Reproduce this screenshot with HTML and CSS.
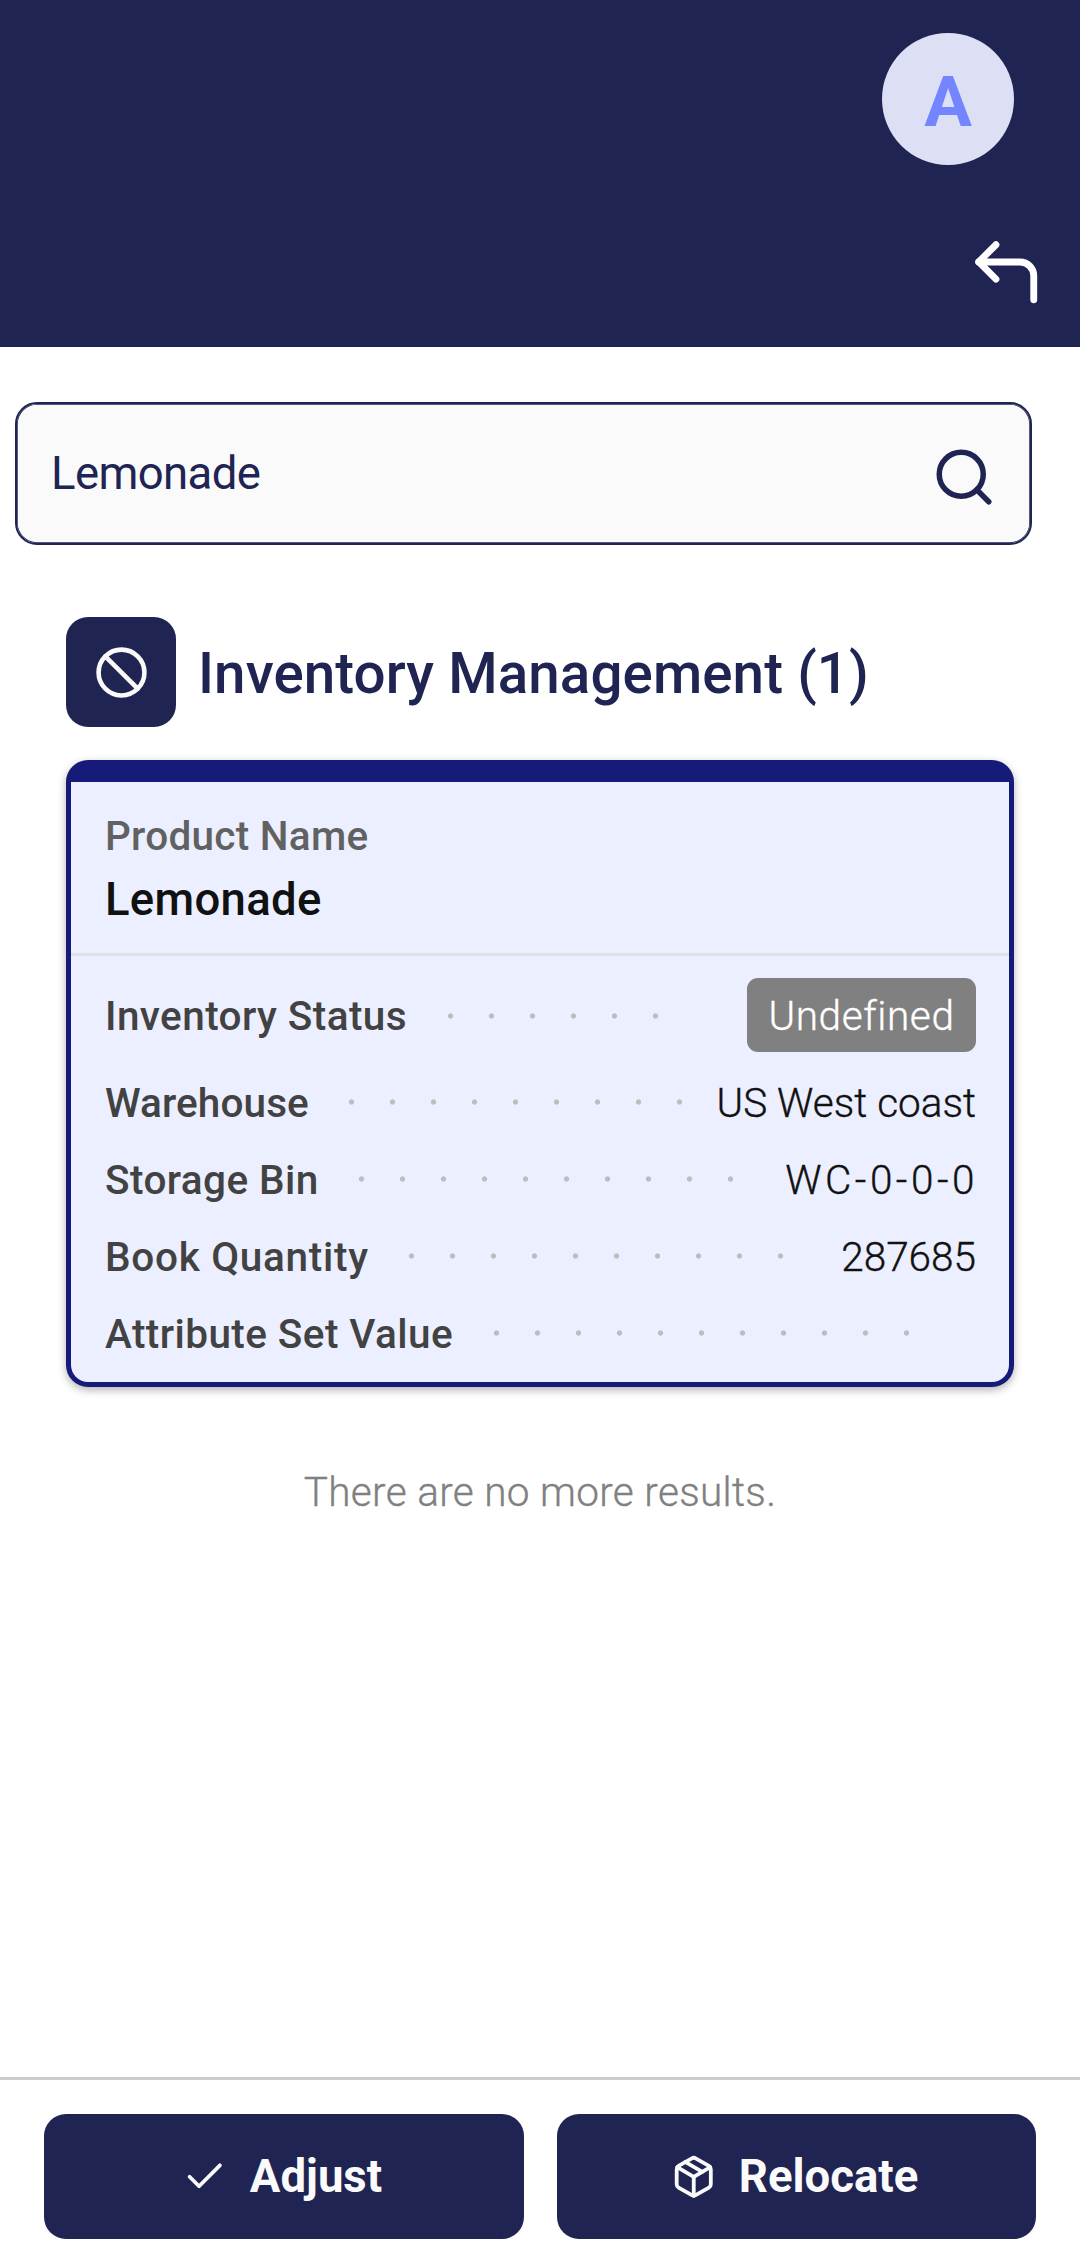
FILE: index.html
```html
<!DOCTYPE html>
<html lang="en">
<head>
<meta charset="utf-8">
<title>Inventory Management</title>
<link rel="stylesheet" href="styles.css">
</head>
<body>
<header class="header">
  <div class="avatar">A</div>
  <svg class="back" viewBox="0 0 24 24"><polyline points="9 14 4 9 9 4"/><path d="M20 20v-7a4 4 0 0 0-4-4H4"/></svg>
</header>
<main class="main">
  <div class="search">
    <span class="search-text">Lemonade</span>
    <svg class="search-icon" viewBox="0 0 24 24"><circle cx="11" cy="11" r="8"/><line x1="21" y1="21" x2="16.65" y2="16.65"/></svg>
  </div>
  <div class="section-head">
    <div class="section-icon"><svg viewBox="0 0 24 24"><circle cx="12" cy="12" r="10"/><line x1="4.93" y1="4.93" x2="19.07" y2="19.07"/></svg></div>
    <h1 class="title">Inventory Management (1)</h1>
  </div>
  <section class="card">
    <div class="product">
      <div class="product-label">Product Name</div>
      <div class="product-name">Lemonade</div>
    </div>
    <div class="rows">
      <div class="row row-status"><span class="label">Inventory Status</span><i class="dots dots-6"></i><span class="badge">Undefined</span></div>
      <div class="row"><span class="label label-warehouse">Warehouse</span><i class="dots dots-9"></i><span class="value">US West coast</span></div>
      <div class="row"><span class="label">Storage Bin</span><i class="dots dots-10"></i><span class="value value-bin">WC-0-0-0</span></div>
      <div class="row"><span class="label label-quantity">Book Quantity</span><i class="dots dots-10"></i><span class="value">287685</span></div>
      <div class="row"><span class="label">Attribute Set Value</span><i class="dots dots-11"></i></div>
    </div>
  </section>
  <p class="no-more">There are no more results.</p>
</main>
<footer class="actions">
  <button class="btn"><svg viewBox="0 0 24 24"><polyline points="20 6 9 17 4 12"/></svg><span>Adjust</span></button>
  <button class="btn"><svg viewBox="0 0 24 24"><line x1="16.5" y1="9.4" x2="7.5" y2="4.21"/><path d="M21 16V8a2 2 0 0 0-1-1.73l-7-4a2 2 0 0 0-2 0l-7 4A2 2 0 0 0 3 8v8a2 2 0 0 0 1 1.73l7 4a2 2 0 0 0 2 0l7-4A2 2 0 0 0 21 16z"/><polyline points="3.27 6.96 12 12.01 20.73 6.96"/><line x1="12" y1="22.08" x2="12" y2="12"/></svg><span>Relocate</span></button>
</footer>
</body>
</html>
```
FILE: styles.css
```css
* { box-sizing: border-box; }
body {
  margin: 0;
  height: 2255px;
  display: flex;
  flex-direction: column;
  background: #fff;
  color: #111;
  font-family: Roboto, "Noto Sans", sans-serif;
  font-size: 40.5px;
}
svg {
  display: block;
  fill: none;
  stroke: currentColor;
  stroke-width: 2;
  stroke-linecap: round;
  stroke-linejoin: round;
}
.header {
  height: 347px;
  padding: 33px 33px 0 0;
  display: flex;
  flex-direction: column;
  align-items: flex-end;
  gap: 66px;
  background: #202452;
  color: #fff;
}
.avatar {
  width: 132px;
  height: 132px;
  margin-right: 33px;
  border-radius: 50%;
  background: #dddff5;
  color: #7385ff;
  font-size: 71px;
  font-weight: 700;
  line-height: 137px;
  text-align: center;
}
.back { width: 82.5px; height: 82.5px; }
.main { flex: 1; display: flex; flex-direction: column; }
.search {
  height: 143px;
  margin: 55px 48px 0 15px;
  padding: 0 33px 0 34px;
  display: flex;
  align-items: center;
  justify-content: space-between;
  border: 2px solid #202452;
  border-radius: 22px;
  box-shadow: inset 0 0 0 0.75px #202452;
  background: #fafafa;
  color: #202452;
}
.search-text {
  font-size: 45.5px;
  letter-spacing: -0.6px;
  line-height: 60px;
}
.search-icon { width: 66px; height: 66px; margin-top: 6px; }
.section-head {
  margin: 72px 66px 0;
  height: 110px;
  display: flex;
  align-items: center;
  gap: 22px;
}
.section-icon {
  width: 110px;
  height: 110px;
  display: grid;
  place-items: center;
  border-radius: 22px;
  background: #202452;
  color: #fafafa;
}
.section-icon svg { width: 55px; height: 55px; }
.title {
  margin: 0;
  padding-top: 3px;
  color: #202452;
  font-size: 56.5px;
  font-weight: 500;
  letter-spacing: 0.1px;
  line-height: 70px;
  white-space: nowrap;
}
.card {
  height: 627px;
  margin: 33px 66px 0;
  border: 5.5px solid #161a78;
  border-top-width: 22px;
  border-radius: 22px;
  background: #ecefff;
  box-shadow: 0 3px 8px rgba(0, 0, 0, 0.3);
}
.product {
  height: 174px;
  padding: 25px 33px 0 34px;
  border-bottom: 3px solid #dfe0e3;
}
.product-label {
  color: #616161;
  font-weight: 500;
  letter-spacing: 0.27px;
  line-height: 58px;
}
.product-name {
  font-size: 45.5px;
  font-weight: 500;
  letter-spacing: 0.3px;
  line-height: 70px;
}
.rows { padding: 0 33px 0 34px; }
.row { height: 77px; display: flex; align-items: center; white-space: nowrap; }
.row-status { height: 108px; padding-top: 10px; }
.label {
  padding-top: 2px;
  color: #424242;
  font-weight: 500;
  letter-spacing: 0.42px;
  line-height: 75px;
}
.label-warehouse { letter-spacing: 0.1px; }
.label-quantity { letter-spacing: 0.7px; }
.dots {
  height: 8px;
  margin: -1px 0 0 22.5px;
  background: radial-gradient(circle at 20.5px 4px, #bdbdbd 2.2px, transparent 3.1px) 0 0 / 41px 8px repeat-x;
}
.row-status .dots { margin-top: 2px; }
.dots-6 { width: 246px; }
.dots-9 { width: 369px; }
.dots-10 { width: 410px; }
.dots-11 { width: 451px; }
.value {
  margin-left: auto;
  font-weight: 300;
  -webkit-text-stroke: 0.35px currentColor;
}
.value-bin { letter-spacing: 3.5px; margin-right: -2px; }
.badge {
  height: 74px;
  width: 229px;
  margin-left: auto;
  padding-top: 1px;
  border-radius: 11px;
  background: #808080;
  color: #fff;
  font-weight: 300;
  letter-spacing: 0.6px;
  line-height: 74px;
  text-align: center;
  -webkit-text-stroke: 0.35px currentColor;
}
.no-more {
  margin: 76px 0 0;
  color: #808080;
  font-weight: 300;
  letter-spacing: 0.32px;
  line-height: 58px;
  text-align: center;
  -webkit-text-stroke: 0.35px currentColor;
}
.actions {
  height: 178px;
  padding: 34px 44px 0;
  display: flex;
  gap: 33px;
  border-top: 3px solid #ccc;
}
.btn {
  flex: 1;
  height: 125px;
  padding: 0 3px 0 0;
  display: flex;
  align-items: center;
  justify-content: center;
  gap: 22px;
  border: 0;
  border-radius: 22px;
  background: #202452;
  color: #fafafa;
  font: 700 45.5px/60px Roboto, sans-serif;
}
.btn svg { width: 45.5px; height: 45.5px; }
```
